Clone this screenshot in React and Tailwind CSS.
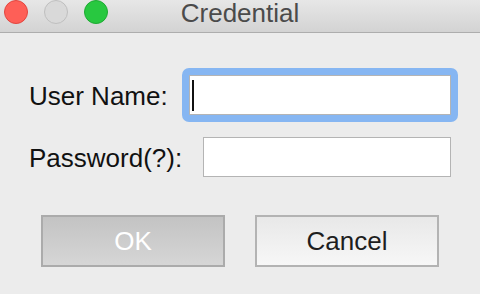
import React from "react";

export default function App() {
  return (
    <div
      className="w-[480px] h-[294px] overflow-hidden bg-[#ececec] flex flex-col"
      style={{ fontFamily: '"Liberation Sans", Arial, sans-serif' }}
    >
      {/* Title bar */}
      <div className="h-[33px] shrink-0 border-b border-[#adadad] bg-gradient-to-b from-[#e7e7e7] to-[#d3d3d3] grid grid-cols-[1fr_auto_1fr]">
        <div className="flex items-start gap-[16px] pl-[4px] pt-0">
          <div className="w-[24px] h-[24px] rounded-full bg-[#fe5f57] border border-[#e2463f]" />
          <div className="w-[24px] h-[24px] rounded-full bg-[#d9d9d9] border border-[#bfbfbf]" />
          <div className="w-[24px] h-[24px] rounded-full bg-[#28c840] border border-[#1eaa33]" />
        </div>
        <div className="text-[26px] leading-[26px] text-[#4b4b4b] pt-0 -mt-[0.5px]">
          Credential
        </div>
        <div />
      </div>

      {/* Body */}
      <div className="flex flex-col pt-[35px] text-[#111111]">
        {/* User Name row */}
        <div className="flex items-center pl-[29px] h-[54px]">
          <div className="w-[153px] text-[26px] leading-[26px] translate-y-[1px]">User Name:</div>
          <div className="w-[276px] h-[54px] rounded-[7px] bg-[#86b6f2] p-[7px]">
            <div className="w-full h-full bg-white border border-[#b4b4b4] pl-[2px] pt-[4px]">
              <div className="w-[2px] h-[31px] bg-[#111111]" />
            </div>
          </div>
        </div>

        {/* Password row */}
        <div className="flex items-center pl-[29px] h-[40px] mt-[15px]">
          <div className="w-[174px] text-[26px] leading-[26px] translate-y-[1px]">Password(?):</div>
          <div className="w-[248px] h-[40px] bg-white border border-[#b4b4b4]" />
        </div>

        {/* Buttons */}
        <div className="flex pl-[41px] gap-[30px] mt-[38px]">
          <div className="w-[184px] h-[52px] border-2 border-[#ababab] bg-gradient-to-b from-[#c3c3c3] to-[#d6d6d6] flex items-center justify-center text-white text-[26px] leading-[26px]">
            OK
          </div>
          <div className="w-[184px] h-[52px] border-2 border-[#b3b3b3] bg-gradient-to-b from-[#e8e8e8] to-[#f7f7f7] flex items-center justify-center text-[#1e1e1e] text-[26px] leading-[26px]">
            Cancel
          </div>
        </div>
      </div>
    </div>
  );
}
